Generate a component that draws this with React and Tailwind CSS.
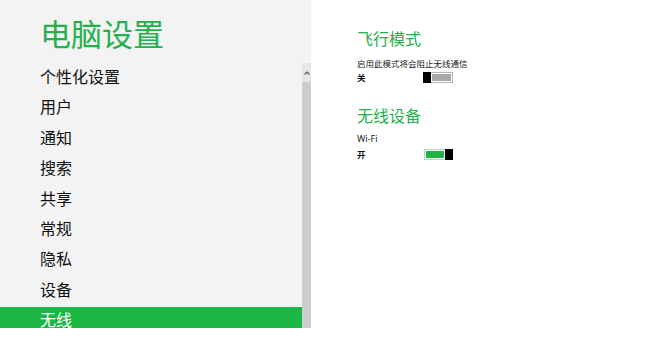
import React from "react";

const NAV_ITEMS = ["个性化设置", "用户", "通知", "搜索", "共享", "常规", "隐私", "设备", "无线"];
const ACTIVE = "无线";

const Toggle = ({ on }) => {
  if (on) {
    return (
      <div className="flex h-[11px] w-[29px] border border-[#b8d8c0]">
        <div className="flex-1 border border-white bg-[#1fb346]" />
        <div className="-my-px -mr-px w-[8px] bg-black" />
      </div>
    );
  }
  return (
    <div className="flex h-[11px] w-[30px] border border-[#b4b4b4]">
      <div className="-my-px -ml-px w-[8px] bg-black" />
      <div className="flex-1 border border-white bg-[#a8a8a8]" />
    </div>
  );
};

const App = () => {
  return (
    <div
      className="flex h-[353px] w-[657px] items-start overflow-hidden bg-white"
      style={{ fontFamily: '"Noto Sans CJK SC", "Noto Sans", sans-serif' }}
    >
      <div className="flex h-[328px] w-[311px] overflow-hidden bg-[#f3f3f3]">
        <div className="flex-1">
          <h1 className="mt-[17px] pl-[40px] text-[31px] leading-[32px] text-[#22b14c]">
            电脑设置
          </h1>
          <ul className="mt-[15px] flex flex-col gap-[6.4px]">
            {NAV_ITEMS.map((item) => (
              <li
                key={item}
                className={`flex h-[24px] items-center pl-[40px] text-[16px] leading-[24px] ${
                  item === ACTIVE ? "bg-[#1bb745] text-white" : "text-[#111]"
                }`}
              >
                {item}
              </li>
            ))}
          </ul>
        </div>
        <div className="mt-[63px] flex w-[9px] flex-col">
          <div className="flex h-[19px] items-center justify-center bg-[#e6e6e6]">
            <svg width="6" height="4" viewBox="0 0 6 4">
              <path d="M0.5 3.5 L3 1 L5.5 3.5" fill="none" stroke="#555" strokeWidth="1.2" />
            </svg>
          </div>
          <div className="flex-1 bg-[#cdcdcd]" />
        </div>
      </div>

      <div className="pl-[46px] pt-[28px] text-[#111]">
        <h2 className="text-[16px] leading-[20px] text-[#22b14c]">飞行模式</h2>
        <p className="mt-[9px] text-[8.5px] leading-[12px] text-[#222]">
          启用此模式将会阻止无线通信
        </p>
        <div className="mt-[3px] flex items-center">
          <span className="w-[66px] text-[8.5px] font-bold leading-[11px]">关</span>
          <Toggle on={false} />
        </div>

        <h2 className="mt-[22px] text-[16px] leading-[20px] text-[#22b14c]">无线设备</h2>
        <p
          className="mt-[8px] text-[9px] leading-[12px] text-[#222]"
          style={{ fontFamily: '"Noto Sans", sans-serif' }}
        >
          Wi-Fi
        </p>
        <div className="mt-[4px] flex items-center">
          <span className="w-[67px] text-[8.5px] font-bold leading-[11px]">开</span>
          <Toggle on />
        </div>
      </div>
    </div>
  );
};

export default App;
